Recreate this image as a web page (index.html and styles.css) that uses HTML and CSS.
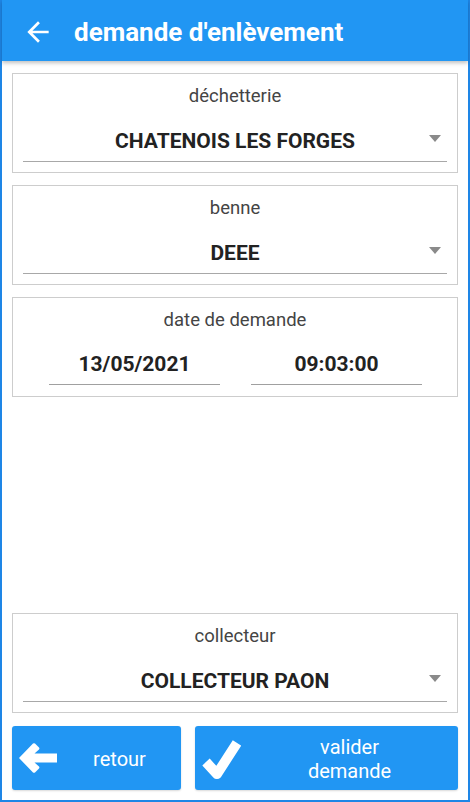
FILE: index.html
```html
<!DOCTYPE html>
<html lang="fr">
<head>
<meta charset="utf-8">
<title>demande d'enlèvement</title>
<link rel="stylesheet" href="styles.css">
</head>
<body>
<div class="screen">
  <header class="appbar">
    <svg class="back" viewBox="0 0 24 24" width="32" height="32"><path d="M20 11H7.83l5.59-5.59L12 4l-8 8 8 8 1.41-1.41L7.83 13H20v-2z" fill="#fff"/></svg>
    <h1 class="title">demande d'enlèvement</h1>
  </header>
  <main class="content">
    <section class="card">
      <div class="label">déchetterie</div>
      <div class="select">
        <span class="value">CHATENOIS LES FORGES</span>
        <span class="caret"></span>
      </div>
    </section>
    <section class="card">
      <div class="label">benne</div>
      <div class="select">
        <span class="value">DEEE</span>
        <span class="caret"></span>
      </div>
    </section>
    <section class="card">
      <div class="label">date de demande</div>
      <div class="dates">
        <div class="field">13/05/2021</div>
        <div class="field">09:03:00</div>
      </div>
    </section>
    <div class="spacer"></div>
    <section class="card">
      <div class="label">collecteur</div>
      <div class="select">
        <span class="value">COLLECTEUR PAON</span>
        <span class="caret"></span>
      </div>
    </section>
    <div class="actions">
      <button class="btn btn-back">
        <svg class="btn-icon" viewBox="0 0 40 32" width="40" height="32"><path d="M1 16 L15 1.5 Q16 0.8 17 1.5 L21 5.5 Q21.8 6.5 21 7.5 L16.5 11.5 L39 11.5 L39 20.5 L16.5 20.5 L21 24.5 Q21.8 25.5 21 26.5 L17 30.5 Q16 31.2 15 30.5 Z" fill="#fff"/></svg>
        <span class="btn-text">retour</span>
      </button>
      <button class="btn btn-ok">
        <svg class="btn-icon" viewBox="0 0 40 42" width="40" height="42"><polyline points="5,23 16,35 36,4" fill="none" stroke="#fff" stroke-width="10" stroke-linejoin="round"/></svg>
        <span class="btn-text">valider<br>demande</span>
      </button>
    </div>
  </main>
</div>
</body>
</html>
```
FILE: styles.css
```css
* { box-sizing: border-box; }
html, body { margin: 0; padding: 0; }
body {
  font-family: Roboto, "Noto Sans", sans-serif;
  background: #fff;
}
.screen {
  width: 470px;
  height: 802px;
  border: 2px solid #1e86e6;
  border-top: 0;
  display: flex;
  flex-direction: column;
  background: #fff;
}
.appbar {
  height: 61px;
  flex: none;
  background: #2196f3;
  display: flex;
  align-items: center;
  box-shadow: 0 2px 4px rgba(0,0,0,0.25);
  position: relative;
  z-index: 1;
}
.back {
  margin-left: 20px;
  margin-top: 2px;
}
.title {
  margin: 2px 0 0 20px;
  color: #fff;
  font-size: 26px;
  font-weight: 700;
}
.content {
  flex: 1;
  display: flex;
  flex-direction: column;
  padding: 12px 10px 10px 10px;
  gap: 12px;
}
.card {
  height: 100px;
  flex: none;
  border: 1px solid #cdcdcd;
  display: flex;
  flex-direction: column;
  align-items: center;
  padding-top: 11px;
}
.label {
  font-size: 18.5px;
  color: #444;
  line-height: 22px;
}
.select {
  align-self: stretch;
  margin: 13px 10px 0 10px;
  height: 42px;
  border-bottom: 1.5px solid #a8a8a8;
  display: flex;
  align-items: center;
  justify-content: center;
  position: relative;
}
.value {
  font-size: 21px;
  font-weight: 700;
  color: #222;
  padding-top: 1px;
}
.caret {
  position: absolute;
  right: 6px;
  top: 15px;
  width: 0;
  height: 0;
  border-left: 6px solid transparent;
  border-right: 6px solid transparent;
  border-top: 7px solid #8a8a8a;
}
.dates {
  display: flex;
  justify-content: center;
  gap: 31px;
  margin-top: 12px;
  margin-left: 1px;
}
.field {
  width: 171px;
  height: 42px;
  border-bottom: 1.5px solid #a0a0a0;
  font-size: 21px;
  font-weight: 700;
  color: #222;
  display: flex;
  align-items: center;
  justify-content: center;
  padding-top: 1px;
}
.spacer { flex: 1; }
.actions {
  display: flex;
  gap: 14px;
  height: 64px;
  flex: none;
  margin-top: 1px;
}
.btn {
  border: 0;
  border-radius: 3px;
  background: #2196f3;
  color: #fff;
  font-family: Roboto, "Noto Sans", sans-serif;
  font-size: 20px;
  display: flex;
  align-items: center;
  padding: 0;
  box-shadow: 0 1px 2px rgba(0,0,0,0.15);
}
.btn-back { width: 169px; }
.btn-ok { flex: 1; }
.btn-back .btn-icon { margin-left: 6px; }
.btn-ok .btn-icon { margin-left: 6px; margin-top: 4px; }
.btn-text {
  flex: 1;
  text-align: center;
  line-height: 24px;
  padding-top: 2px;
}
```
